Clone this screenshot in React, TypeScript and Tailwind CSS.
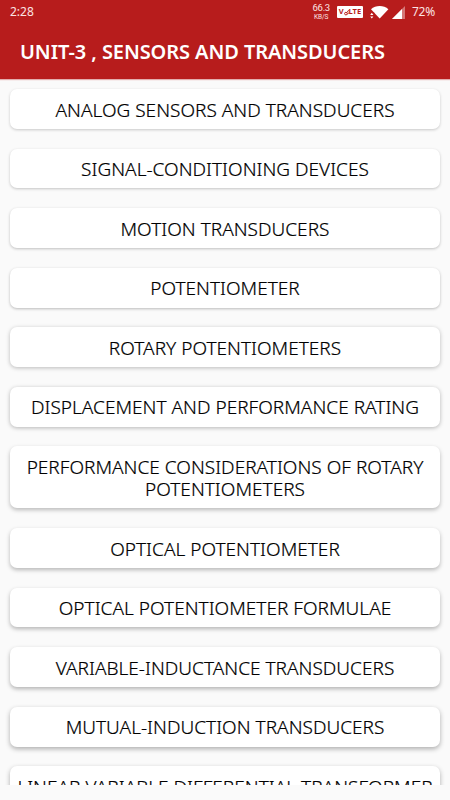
const topics = [
  "ANALOG SENSORS AND TRANSDUCERS",
  "SIGNAL-CONDITIONING DEVICES",
  "MOTION TRANSDUCERS",
  "POTENTIOMETER",
  "ROTARY POTENTIOMETERS",
  "DISPLACEMENT AND PERFORMANCE RATING",
  "PERFORMANCE CONSIDERATIONS OF ROTARY POTENTIOMETERS",
  "OPTICAL POTENTIOMETER",
  "OPTICAL POTENTIOMETER FORMULAE",
  "VARIABLE-INDUCTANCE TRANSDUCERS",
  "MUTUAL-INDUCTION TRANSDUCERS",
  "LINEAR VARIABLE DIFFERENTIAL TRANSFORMER",
];

const shadows = [
  "shadow-[0_1px_3px_rgba(0,0,0,0.20)]",
  "shadow-[0_1px_3px_rgba(0,0,0,0.22)]",
  "shadow-[0_1px_3px_rgba(0,0,0,0.24)]",
  "shadow-[0_1px_3px_rgba(0,0,0,0.26)]",
  "shadow-[0_1px_4px_rgba(0,0,0,0.26)]",
  "shadow-[0_1px_4px_rgba(0,0,0,0.28)]",
  "shadow-[0_2px_4px_rgba(0,0,0,0.26)]",
  "shadow-[0_2px_4px_rgba(0,0,0,0.27)]",
  "shadow-[0_2px_4px_rgba(0,0,0,0.28)]",
  "shadow-[0_2px_4px_rgba(0,0,0,0.29)]",
  "shadow-[0_2px_5px_rgba(0,0,0,0.31)]",
  "shadow-[0_2px_5px_rgba(0,0,0,0.31)]",
];

function StatusBar() {
  return (
    <div className="flex h-6 items-center pl-[10px] pr-[15px] text-[12px] text-[#fbe3e3]">
      <span className="leading-6">2:28</span>
      <div className="ml-auto flex items-center">
        <div className="flex flex-col items-center font-['Roboto',sans-serif]">
          <span className="text-[9.5px] leading-[10px] tracking-[-0.3px]">66.3</span>
          <span className="text-[6.5px] leading-[8px] tracking-[-0.1px]">KB/S</span>
        </div>
        <div className="ml-[7px] flex h-[12px] w-[26px] items-center justify-center rounded-[1px] bg-white text-[7.5px] font-bold text-[#b71c1c]">
          <span>V</span>
          <svg className="h-[7px] w-[5px]" viewBox="0 0 5 7" fill="none" stroke="currentColor">
            <circle cx="1.9" cy="4.6" r="1.3" />
            <path d="M3 3.5 4.6 1.2M3.4 5.4 4.7 3.6" />
          </svg>
          <span>LTE</span>
        </div>
        <svg className="ml-[7px] h-[14px] w-[19px]" viewBox="0 0 19 14" fill="#fff">
          <path d="M1 4.2C5.600-.1 13.800-.1 18.400 4.200L9.700 13.500Z" />
          <path d="M-.8 7.500H4.200L5.200 14H-.8Z" fill="#b71c1c" />
          <path d="M.2 10 1.800 7.800 3.400 10ZM.2 11.400 1.800 13.600 3.400 11.400Z" />
        </svg>
        <svg className="ml-[3px] h-[13px] w-[13px]" viewBox="0 0 13 13">
          <path d="M13 0V13H0Z" fill="#fff" fillOpacity="0.400" />
          <path d="M10 3V13H0Z" fill="#fff" />
        </svg>
        <span className="ml-[7px] leading-6 tracking-[-0.2px]">72%</span>
      </div>
    </div>
  );
}

export default function App() {
  return (
    <div className="flex h-[800px] w-[450px] flex-col overflow-hidden bg-[#fafafa] font-['Noto_Sans','Open_Sans',sans-serif]">
      <header className="h-[79px] shrink-0 bg-[#b71c1c] shadow-[0_1px_1px_rgba(183,28,28,0.35)]">
        <StatusBar />
        <h1 className="pl-5 text-[20px] leading-[56px] font-semibold tracking-[-0.08px] whitespace-nowrap text-white">
          UNIT-3 , SENSORS AND TRANSDUCERS
        </h1>
      </header>
      <main className="flex h-[706px] shrink-0 flex-col gap-[19.8px] overflow-hidden px-[10px] pt-[10px]">
        {topics.map((topic, i) => (
          <div
            key={topic}
            className={`shrink-0 rounded-[7px] bg-white pt-[9.6px] pb-[8.2px] text-center text-[19px] leading-[22px] font-light tracking-[0.02px] text-black [-webkit-text-stroke:0.2px_black] ${shadows[i]}`}
          >
            {topic}
          </div>
        ))}
      </main>
    </div>
  );
}
